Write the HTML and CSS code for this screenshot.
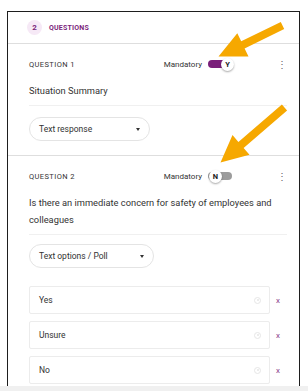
FILE: index.html
```html
<!DOCTYPE html>
<html lang="en">
<head>
    <meta charset="UTF-8">
    <meta name="viewport" content="width=device-width, initial-scale=1.0">
    <title>Questions</title>
    <link rel="stylesheet" href="styles.css">
</head>
<body>
    <div class="frame">
        <div class="section-head">
            <span class="badge">2</span>
            <span class="section-title">QUESTIONS</span>
        </div>

        <div class="question">
            <div class="q-top">
                <span class="q-label">QUESTION 1</span>
                <span class="mandatory">Mandatory</span>
                <span class="toggle on"><span class="knob">Y</span></span>
                <span class="kebab">&#8942;</span>
            </div>
            <div class="q-text">Situation Summary</div>
            <div class="select">Text response <span class="caret"></span></div>
        </div>

        <div class="question">
            <div class="q-top">
                <span class="q-label">QUESTION 2</span>
                <span class="mandatory">Mandatory</span>
                <span class="toggle off"><span class="knob">N</span></span>
                <span class="kebab">&#8942;</span>
            </div>
            <div class="q-text">Is there an immediate concern for safety of employees and colleagues</div>
            <div class="select wide">Text options / Poll <span class="caret"></span></div>

            <ul class="options">
                <li class="option"><span class="opt-box">Yes <span class="radio"></span></span><span class="remove">x</span></li>
                <li class="option"><span class="opt-box">Unsure <span class="radio"></span></span><span class="remove">x</span></li>
                <li class="option"><span class="opt-box">No <span class="radio"></span></span><span class="remove">x</span></li>
            </ul>
        </div>

        <!-- callout arrows, drawn in page coordinates -->
        <svg class="arrows" width="293" height="375" viewBox="8.5 12.5 293 375">
            <g fill="#f6a800">
                <polygon points="281.3,22.4 241.7,41.8 237.8,33.7 219,57 249,57.1 245.1,49 284.7,29.6"/>
                <polygon points="282.4,105 238.9,142.4 233,135.5 221,163 250,155.3 244.1,148.4 287.6,111"/>
            </g>
        </svg>
    </div>
    <div class="bottom-strip"></div>
</body>
</html>
```

FILE: styles.css
```css
*{
    margin: 0;
    padding: 0;
    box-sizing: border-box;
}

body{
    font-family: Roboto, "Noto Sans", sans-serif;
    background-color: #fff;
    color: #333;
}

.frame{
    position: relative;
    margin: 11px 0 0 7px;
    width: 293px;
    height: 375px;
    border: 1.5px solid #1e1e1e;
    border-bottom: none;
    overflow: hidden;
}

.section-head{
    display: flex;
    align-items: center;
    height: 32px;
    padding-left: 19px;
    border-bottom: 1px solid #dedede;
}

.badge{
    width: 15px;
    height: 15px;
    border-radius: 50%;
    background-color: #f6e9f6;
    color: #7b1f7b;
    font-size: 8px;
    font-weight: 700;
    display: flex;
    align-items: center;
    justify-content: center;
}

.section-title{
    margin-left: 7px;
    font-size: 7px;
    font-weight: 700;
    letter-spacing: 0.2px;
    color: #7b1f7b;
}

.question{
    padding: 13px 12px 14px 21px;
    border-bottom: 1px solid #dedede;
}

.question:last-of-type{
    border-bottom: none;
}

.q-top{
    display: flex;
    align-items: center;
    height: 14px;
}

.q-label{
    flex: 1;
    font-size: 7.5px;
    letter-spacing: 0.4px;
    color: #333;
}

.mandatory{
    font-size: 8px;
    color: #333;
    margin-right: 6px;
}

.toggle{
    width: 24px;
    height: 8px;
    border-radius: 4px;
    display: flex;
    align-items: center;
}

.toggle.on{
    background-color: #7a1f7a;
}

.toggle.off{
    background-color: #9c9c9c;
}

.knob{
    flex-shrink: 0;
    width: 13px;
    height: 13px;
    border-radius: 50%;
    background-color: #fff;
    box-shadow: 0 1px 2px rgba(0,0,0,0.35);
    font-size: 7.5px;
    font-weight: 700;
    color: #222;
    display: flex;
    align-items: center;
    justify-content: center;
}

.toggle.on .knob{
    margin-left: 13px;
}

.toggle.off .knob{
    margin-left: 1px;
}

.kebab{
    margin-left: 45px;
    width: 10px;
    font-size: 10px;
    color: #666;
    text-align: center;
}

.q-text{
    margin-top: 11px;
    padding-bottom: 6px;
    font-size: 9.3px;
    line-height: 17px;
    color: #333;
    border-bottom: 1px solid #f0f0f0;
}

.select{
    margin-top: 11px;
    width: 121px;
    height: 24px;
    border: 1px solid #e4e4e4;
    border-radius: 12px;
    display: flex;
    align-items: center;
    justify-content: space-between;
    padding: 0 9px;
    font-size: 8.5px;
    color: #333;
}

.select.wide{
    width: 125px;
    margin-top: 9px;
}

.caret{
    width: 0;
    height: 0;
    border-left: 2.5px solid transparent;
    border-right: 2.5px solid transparent;
    border-top: 3px solid #333;
}

.options{
    list-style: none;
    margin-top: 18px;
}

.option{
    display: flex;
    align-items: center;
    margin-bottom: 7px;
}

.opt-box{
    width: 241px;
    height: 28px;
    border: 1px solid #ececec;
    border-radius: 2px;
    display: flex;
    align-items: center;
    justify-content: space-between;
    padding: 0 8px 0 9px;
    font-size: 8.5px;
    color: #333;
}

.radio{
    width: 7px;
    height: 7px;
    border-radius: 50%;
    border: 1px solid #e6e6e6;
    position: relative;
}

.radio::after{
    content: '';
    position: absolute;
    left: 1.5px;
    top: 1.5px;
    width: 2px;
    height: 2px;
    border-radius: 50%;
    background-color: #e6e6e6;
}

.remove{
    margin-left: 6px;
    font-size: 8px;
    color: #8a3b8a;
}

.arrows{
    position: absolute;
    left: 0;
    top: 0;
    pointer-events: none;
}

.bottom-strip{
    height: 5px;
    background-color: #f0f0f0;
}
```
